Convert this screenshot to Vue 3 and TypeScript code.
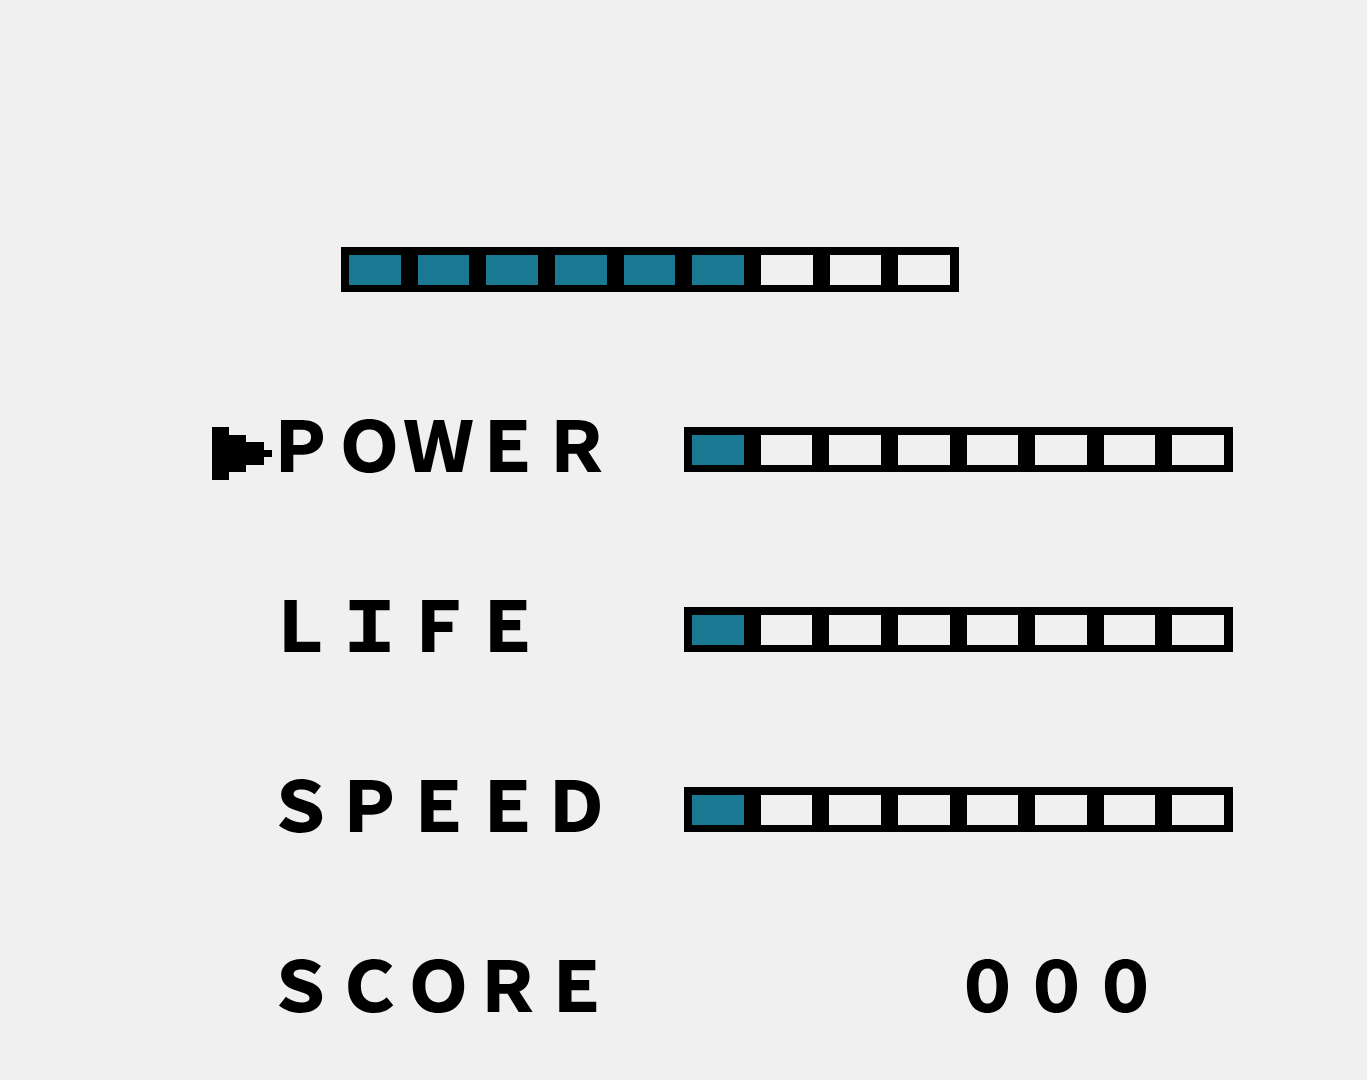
<script setup lang="ts">
import { ref } from 'vue'

interface Stat {
  name: string
  level: number
}

const health = 6
const healthMax = 9
const statMax = 8
const stats: Stat[] = [
  { name: 'POWER', level: 1 },
  { name: 'LIFE', level: 1 },
  { name: 'SPEED', level: 1 },
]
const score = '000'
const selected = ref(0)
</script>

<template>
  <main class="screen">
    <div class="row row-health">
      <div class="gauge" role="meter" aria-label="Health" aria-valuemin="0" :aria-valuemax="healthMax" :aria-valuenow="health">
        <span v-for="n in healthMax" :key="n" class="cell" :class="{ full: n <= health }"></span>
      </div>
    </div>

    <div v-for="(stat, i) in stats" :key="stat.name" class="row">
      <svg v-if="selected === i" class="cursor" viewBox="0 0 60 53" shape-rendering="crispEdges" aria-hidden="true">
        <path d="M0 0H17V8H34V15H52V23H60V30H52V38H34V45H17V53H0Z" />
      </svg>
      <button class="label" type="button" :aria-pressed="selected === i" @click="selected = i">{{ stat.name }}</button>
      <div class="gauge" role="meter" :aria-label="stat.name" aria-valuemin="0" :aria-valuemax="statMax" :aria-valuenow="stat.level">
        <span v-for="n in statMax" :key="n" class="cell" :class="{ full: n <= stat.level }"></span>
      </div>
    </div>

    <div class="row">
      <span class="label">SCORE</span>
      <span class="label score">{{ score }}</span>
    </div>
  </main>
</template>

<style>
body {
  margin: 0;
  background: #f0f0f0;
}
</style>

<style scoped>
.screen {
  padding: 179px 134px 0 212px;
  color: #000;
  font-family: "Noto Sans CJK JP", "DejaVu Sans", sans-serif;
}

.row {
  display: grid;
  grid-template-columns: 54px 418fr 549fr;
  align-items: center;
  height: 180px;
}

.row-health {
  grid-template-columns: 129fr 618fr 274fr;
}

.row-health .gauge {
  grid-column: 2;
}

.cursor {
  grid-column: 1;
  width: 60px;
  height: 53px;
  padding-top: 8px;
}

/* full-width forms keep every letter on the same square tile */
.label {
  grid-column: 2;
  margin: 0;
  padding: 0 0 14px;
  border: 0;
  background: none;
  color: inherit;
  font-family: inherit;
  font-size: 69px;
  font-weight: 900;
  font-variant-east-asian: full-width;
  line-height: 80px;
  text-align: left;
  white-space: nowrap;
}

button.label {
  cursor: pointer;
}

.score {
  grid-column: 3;
  padding-left: 49%;
}

.gauge {
  display: flex;
  gap: 17px;
  padding: 8px 9px 7px 8px;
  background: #000;
}

.cell {
  flex: 1;
  height: 30px;
  background: #f0f0f0;
}

.full {
  background: #1a7892;
}
</style>
